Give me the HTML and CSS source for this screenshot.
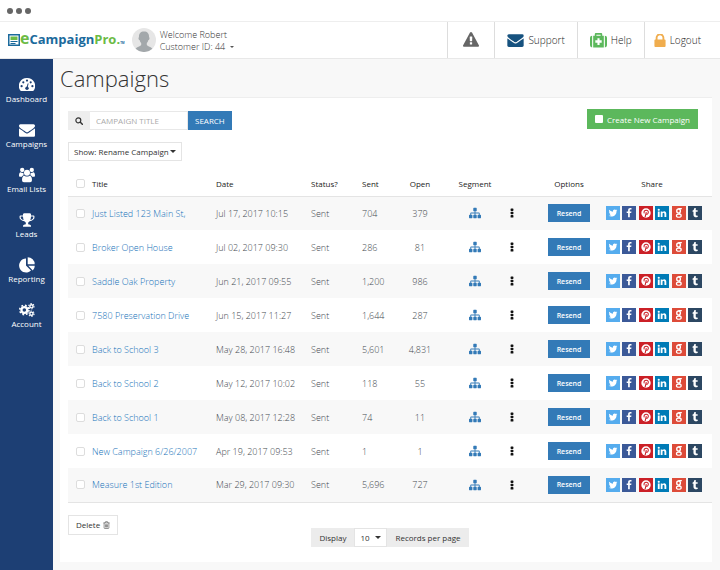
FILE: index.html
```html
<!DOCTYPE html>
<html lang="en">
<head>
  <meta charset="UTF-8">
  <title>Campaigns</title>
  <link rel="stylesheet" href="styles.css">
</head>
<body>

  <!-- Icon sprite -->
  <svg class="sprite" aria-hidden="true">
    <symbol id="i-twitter" viewBox="0 0 1792 1792"><path d="M1684 408q-67 98-162 167 1 14 1 42 0 130-38 259.500t-115.500 248.500-184.500 210.500-258 146-323 54.500q-271 0-496-145 35 4 78 4 225 0 401-138-105-2-188-64.500t-114-159.500q33 5 61 5 43 0 85-11-112-23-185.500-111.500t-73.500-205.500v-4q68 38 146 41-66-44-105-115t-39-154q0-88 44-163 121 149 294.500 238.500t371.500 99.500q-8-38-8-74 0-134 94.500-228.500t228.500-94.500q140 0 236 102 109-21 205-78-37 115-142 178 93-10 186-50z"/></symbol>
    <symbol id="i-facebook" viewBox="0 0 1792 1792"><path d="M1343 12v264h-157q-86 0-116 36t-30 108v189h293l-39 296h-254v759h-306v-759h-255v-296h255v-218q0-186 104-288.500t277-102.500q147 0 228 12z"/></symbol>
    <symbol id="i-pinterest" viewBox="0 0 16 16"><circle cx="8" cy="8" r="7.500"/><path d="M6.600 14.500 8.500 6.500M5.200 8.600C3.800 5.500 6 3.700 8.300 3.700c2.600 0 3.800 1.800 3.300 3.900-.6 2.700-3 3.100-3.700 1.700" fill="none" stroke="#cb2027" stroke-width="1.700"/></symbol>
    <symbol id="i-linkedin" viewBox="0 0 1792 1792"><path d="M477 625v991h-330v-991h330zm21-306q1 73-50.500 122t-135.500 49h-2q-82 0-132-49t-50-122q0-74 51.500-122.500t134.500-48.500 133 48.500 51 122.500zm1166 729v568h-329v-530q0-105-40.500-164.500t-126.500-59.500q-63 0-105.500 34.500t-63.500 85.500q-11 30-11 81v553h-329q2-399 2-647t-1-296l-1-48h329v144h-2q20-32 41-56t56.500-52 87-43.500 114.500-15.500q171 0 275 113.500t104 332.500z"/></symbol>
    <symbol id="i-google" viewBox="0 0 16 16"><g fill="none" stroke="#fff"><ellipse cx="7.300" cy="4.800" rx="2.900" ry="3.300" stroke-width="2.200"/><ellipse cx="7.700" cy="12.300" rx="3.800" ry="2.500" stroke-width="1.900"/><path d="M7 1h5.500M8 7.800c-1 1 3 1 3.200 3.800" stroke-width="1.700"/></g></symbol>
    <symbol id="i-tumblr" viewBox="0 0 1792 1792"><path d="M1328 1329l80 237q-23 35-111 66t-177 32q-104 2-190.500-26t-142.500-74-95-106-55.500-120-16.500-118v-544h-168v-215q72-26 129-69.500t91-90 58-102 34-99 15-88.500q1-5 4.500-8.500t7.500-3.500h244v424h333v252h-334v518q0 30 6.500 56t22.500 52.500 49.500 41.500 81.500 14q78-2 134-29z"/></symbol>
    <symbol id="i-sitemap" viewBox="0 0 1792 1792"><path d="M1792 1248v320q0 40-28 68t-68 28h-320q-40 0-68-28t-28-68v-320q0-40 28-68t68-28h96v-192h-512v192h96q40 0 68 28t28 68v320q0 40-28 68t-68 28h-320q-40 0-68-28t-28-68v-320q0-40 28-68t68-28h96v-192h-512v192h96q40 0 68 28t28 68v320q0 40-28 68t-68 28h-320q-40 0-68-28t-28-68v-320q0-40 28-68t68-28h96v-192q0-52 38-90t90-38h512v-192h-96q-40 0-68-28t-28-68v-320q0-40 28-68t68-28h320q40 0 68 28t28 68v320q0 40-28 68t-68 28h-96v192h512q52 0 90 38t38 90v192h96q40 0 68 28t28 68z"/></symbol>
    <symbol id="i-dots" viewBox="0 0 4 12"><rect x=".3" y=".5" width="3.400" height="3" rx=".8"/><rect x=".3" y="4.500" width="3.400" height="3" rx=".8"/><rect x=".3" y="8.500" width="3.400" height="3" rx=".8"/></symbol>
    <symbol id="i-envelope" viewBox="0 128 1792 1536"><path d="M1792 710v794q0 66-47 113t-113 47h-1472q-66 0-113-47t-47-113v-794q44 49 101 87 362 246 497 345 57 42 92.500 65.500t94.500 48 110 24.500h2q51 0 110-24.500t94.500-48 92.500-65.500q170-123 498-345 57-39 100-87zm0-294q0 79-49 151t-122 123q-376 261-468 325-10 7-42.500 31t-54 38.500-52 32.500-57.500 27-50 9h-2q-23 0-50-9t-57.500-27-52-32.500-54-38.500-42.500-31q-91-64-262-182.500t-205-142.500q-62-42-117-115.500t-55-136.500q0-78 41.500-130t118.500-52h1472q65 0 112.500 47t47.500 113z"/></symbol>
    <symbol id="i-trophy" viewBox="0 0 1792 1792"><path d="M522 883q-74-162-74-371h-256v96q0 78 94.500 162t235.500 113zm1078-275v-96h-256q0 209-74 371 141-29 235.500-113t94.500-162zm128-128v128q0 71-41.500 143t-112 130-173 97.500-215.500 44.500q-42 54-95 95-38 34-52.500 72.500t-14.500 89.500q0 54 30.500 91t97.500 37q75 0 133.500 45.500t58.500 114.500v64q0 14-9 23t-23 9h-832q-14 0-23-9t-9-23v-64q0-69 58.500-114.500t133.500-45.500q67 0 97.500-37t30.500-91q0-51-14.500-89.500t-52.500-72.500q-53-41-95-95-113-5-215.500-44.500t-173-97.500-112-130-41.500-143v-128q0-40 28-68t68-28h288v-96q0-66 47-113t113-47h576q66 0 113 47t47 113v96h288q40 0 68 28t28 68z"/></symbol>
    <symbol id="i-warning" viewBox="0 0 1792 1792"><path d="M1024 1375v-190q0-14-9.500-23.500t-22.500-9.500h-192q-13 0-22.500 9.500t-9.500 23.500v190q0 14 9.500 23.500t22.500 9.500h192q13 0 22.500-9.500t9.500-23.500zm-2-374l18-459q0-12-10-19-13-11-24-11h-220q-11 0-24 11-10 7-10 21l17 457q0 10 10 16.500t24 6.500h185q14 0 23.500-6.500t10.500-16.500zm-14-934l768 1408q35 63-2 126-17 29-46.500 46t-63.500 17h-1536q-34 0-63.500-17t-46.500-46q-37-63-2-126l768-1408q17-31 47-49t65-18 65 18 47 49z"/></symbol>
    <symbol id="i-lock" viewBox="320 192 1152 1344"><path d="M640 768h512v-192q0-106-75-181t-181-75-181 75-75 181v192zm832 96v576q0 40-28 68t-68 28h-960q-40 0-68-28t-28-68v-576q0-40 28-68t68-28h32v-192q0-184 132-316t316-132 316 132 132 316v192h32q40 0 68 28t28 68z"/></symbol>
    <symbol id="i-medkit" viewBox="0 0 16 14"><path d="M0 4.500Q0 2.500 2 2.500v11Q0 13.500 0 11.500zM16 4.500q0-2-2-2v11q2 0 2-2zM3 2.500h1.500V1q0-1 1-1h5q1 0 1 1v1.500H13v11H3zM6 1.500v1h4v-1zM7 4.800v2H5v2.400h2v2h2v-2h2V6.800H9v-2z" fill-rule="evenodd"/></symbol>
    <symbol id="i-dashboard" viewBox="0 0 16 14"><path d="M8 0a8 8 0 0 1 6.900 12.300q-.4.700-1.200.7H2.300q-.8 0-1.200-.7A8 8 0 0 1 8 0z"/><g fill="#1d3f74"><circle cx="2.600" cy="8.200" r="1.100"/><circle cx="4.300" cy="4.300" r="1.100"/><circle cx="8" cy="2.600" r="1.100"/><circle cx="11.700" cy="4.300" r="1.100"/><circle cx="13.400" cy="8.200" r="1.100"/><circle cx="8" cy="10.200" r="1.700"/></g><path d="M8 10.200 9.100 5.500" stroke="#1d3f74" stroke-width="1"/></symbol>
    <symbol id="i-users" viewBox="0 0 17 16"><circle cx="3.400" cy="2.700" r="2.300"/><circle cx="13.600" cy="2.700" r="2.300"/><path d="M0 9q0-3.800 1.800-3.800 1.400 1 3 .4Q4.600 7.500 5 8.200 3.500 8.700 3 9.800H1Q0 9.800 0 9zM17 9q0-3.800-1.800-3.800-1.400 1-3 .4.200 1.900-.2 2.600 1.500.5 2 1.600h2q1 0 1-.8z"/><circle cx="8.500" cy="5.500" r="3.200"/><path d="M3.200 13.500q0-4.800 2.600-4.800 2.700 2 5.400 0 2.600 0 2.600 4.800 0 2.300-2 2.300H5.200q-2 0-2-2.300z"/></symbol>
    <symbol id="i-pie" viewBox="0 0 16 16"><path d="M7 1.500V8.500l5 5A7 7 0 1 1 7 1.500zM8.700.3A7 7 0 0 1 15.700 7.300h-7zM9.300 8.800h6.500q0 2.700-2 4.600z"/></symbol>
    <symbol id="i-cogs" viewBox="0 0 18 16"><g fill="none" stroke="#fff"><circle cx="6" cy="8" r="3.300" stroke-width="2.600"/><circle cx="6" cy="8" r="5.200" stroke-width="1.800" stroke-dasharray="2.050 2.034"/><circle cx="14" cy="3.800" r="1.800" stroke-width="1.600"/><circle cx="14" cy="3.800" r="3" stroke-width="1.200" stroke-dasharray="1.570 1.570"/><circle cx="14" cy="12.200" r="1.800" stroke-width="1.600"/><circle cx="14" cy="12.200" r="3" stroke-width="1.200" stroke-dasharray="1.570 1.570"/></g></symbol>
    <symbol id="i-search" viewBox="0 0 12 12"><path d="M8 8l3 3" stroke="#333" stroke-width="2.200" stroke-linecap="round"/><circle cx="5" cy="5" r="3.700" fill="none" stroke="#333" stroke-width="1.800"/></symbol>
    <symbol id="i-trash" viewBox="0 0 10 11"><path d="M.5 2.500h9M3.200 2.500v-1q0-.8.800-.8h2q.8 0 .8.800v1M1.600 2.500v7q0 1 1 1h4.800q1 0 1-1v-7M3.600 4.500V9M5 4.500V9M6.400 4.500V9" fill="none" stroke="#555" stroke-width=".9"/></symbol>
  </svg>

  <div class="window-bar">
    <span class="dot"></span>
    <span class="dot"></span>
    <span class="dot"></span>
  </div>

  <header class="header">
    <a class="logo" href="#">
      <svg class="logo-mark" viewBox="0 0 12 12"><path fill="#1b6a9c" d="M0 0h12v12H0z"/><path fill="#fff" d="M1.500 1.500h9v9h-9z"/><path fill="#6cbb45" d="M2.500 2.500h7V6h-7z"/><path fill="#1b6a9c" d="M2.500 7h7v1h-7zM2.500 9h5v1h-5z"/></svg>
      <span class="logo-text"><span class="logo-e">e</span>Campaign<span class="logo-pro">Pro.</span></span>
      <span class="logo-tm">TM</span>
    </a>
    <div class="user">
      <svg class="avatar" viewBox="0 0 24 24"><circle cx="12" cy="12" r="12" fill="#e6e6e6"/><path fill="#a3a8ab" d="M12 3.500c3.800 0 5.300 2.500 5 5.800 1 .3.400 2.500-.6 2.800-.4 1.600-1 2.400-1.600 3v2c1.200 1.500 4.200 1.600 5.600 3.700A12 12 0 0 1 12 24a12 12 0 0 1-8.400-3.200c1.400-2.100 4.400-2.200 5.600-3.700v-2c-.6-.6-1.200-1.400-1.600-3-1-.3-1.600-2.500-.6-2.800-.3-3.300 1.200-5.800 5-5.800z"/></svg>
      <div class="user-info">
        <div>Welcome Robert</div>
        <button class="user-menu">Customer ID: 44 <span class="caret"></span></button>
      </div>
    </div>
    <nav class="top-nav">
      <a href="#" aria-label="Alerts"><svg class="icon-warning"><use href="#i-warning"/></svg></a>
      <a href="#"><svg class="icon-support"><use href="#i-envelope"/></svg>Support</a>
      <a href="#"><svg class="icon-help"><use href="#i-medkit"/></svg>Help</a>
      <a href="#"><svg class="icon-logout"><use href="#i-lock"/></svg>Logout</a>
    </nav>
  </header>

  <div class="layout">
    <nav class="sidebar">
      <a href="#"><svg><use href="#i-dashboard"/></svg>Dashboard</a>
      <a href="#"><svg><use href="#i-envelope"/></svg>Campaigns</a>
      <a href="#"><svg><use href="#i-users"/></svg>Email Lists</a>
      <a href="#"><svg><use href="#i-trophy"/></svg>Leads</a>
      <a href="#"><svg><use href="#i-pie"/></svg>Reporting</a>
      <a href="#"><svg><use href="#i-cogs"/></svg>Account</a>
    </nav>

    <main class="content">
      <h1>Campaigns</h1>
      <section class="panel">
        <div class="toolbar">
          <form class="search">
            <label for="search-title" aria-label="Campaign title"><svg><use href="#i-search"/></svg></label>
            <input id="search-title" type="text" placeholder="CAMPAIGN TITLE">
            <button type="button">SEARCH</button>
          </form>
          <button class="create"><span class="create-box"></span>Create New Campaign</button>
        </div>

        <div class="select show-select">
          <select aria-label="Show">
            <option>Show: Rename Campaign</option>
          </select>
        </div>

        <table class="campaigns">
          <thead>
            <tr>
              <th class="col-check"><input type="checkbox" aria-label="Select all"></th>
              <th>Title</th>
              <th class="col-date">Date</th>
              <th class="col-status">Status?</th>
              <th class="col-sent">Sent</th>
              <th class="col-open">Open</th>
              <th class="col-segment">Segment</th>
              <th class="col-more"></th>
              <th class="col-options">Options</th>
              <th class="col-share">Share</th>
            </tr>
          </thead>
          <tbody id="campaign-rows"></tbody>
        </table>

        <button class="delete">Delete <svg><use href="#i-trash"/></svg></button>

        <div class="pager">
          <label for="page-size">Display</label>
          <div class="select">
            <select id="page-size">
              <option>10</option>
            </select>
          </div>
          <span>Records per page</span>
        </div>
      </section>
    </main>
  </div>

  <script src="script.js"></script>
</body>
</html>
```
FILE: styles.css
```css
* {
  box-sizing: border-box;
}

html,
body {
  margin: 0;
  min-height: 100%;
}

body {
  background: #f8f8f8;
  color: #333;
  display: flex;
  flex-direction: column;
  font-family: "Open Sans", "Noto Sans", sans-serif;
  font-size: 8px;
  min-height: 100vh;
}

a {
  color: #1672b8;
  text-decoration: none;
}

button,
input,
select {
  background: none;
  border: 0;
  border-radius: 0;
  color: inherit;
  font: inherit;
  margin: 0;
  padding: 0;
}

button,
select {
  cursor: pointer;
}

svg {
  display: block;
  fill: currentColor;
}

.sprite {
  height: 0;
  position: absolute;
  width: 0;
}

.window-bar {
  align-items: center;
  background: #fff;
  border-bottom: 1px solid #eee;
  display: flex;
  gap: 3px;
  height: 22px;
  padding-left: 7px;
}

.dot {
  background: #666;
  border-radius: 50%;
  height: 6px;
  width: 6px;
}

/* Header */
.header {
  background: #fff;
  border-bottom: 1px solid #e8e8e8;
  display: flex;
  height: 37px;
}

.logo {
  align-items: center;
  display: flex;
  padding-left: 8px;
}

.logo-mark {
  height: 12px;
  width: 12px;
}

.logo-text {
  color: #1b6a9c;
  font-size: 13px;
  font-weight: 700;
  line-height: 20px;
  padding-bottom: 3px;
}

.logo-e,
.logo-pro {
  color: #6cbb45;
}

.logo-e {
  font-size: 16px;
}

.logo-tm {
  align-self: flex-end;
  color: #1b6a9c;
  font-size: 3px;
  font-weight: 700;
  padding-bottom: 13px;
}

.user {
  align-items: center;
  display: flex;
  gap: 4px;
  margin-left: 7px;
}

.avatar {
  height: 24px;
  width: 24px;
}

.user-info {
  color: #333;
  font-size: 9px;
  font-weight: 300;
  line-height: 12px;
  padding-top: 1px;
}

.user-menu {
  align-items: center;
  display: flex;
  gap: 5px;
}

.caret {
  border: 2px solid transparent;
  border-bottom: 0;
  border-top-color: #555;
}

.top-nav {
  display: flex;
  margin-left: auto;
}

.top-nav a {
  align-items: center;
  border-left: 1px solid #ddd;
  color: #222;
  display: flex;
  font-size: 10px;
  font-weight: 300;
  gap: 4px;
  padding: 0 12px;
}

.top-nav a:last-child {
  padding: 0 19px 0 9px;
}

.top-nav .icon-warning {
  color: #666;
  height: 16px;
  margin: 0 3px;
  width: 16px;
}

.icon-support {
  color: #17527f;
  height: 14px;
  width: 17px;
}

.icon-help {
  color: #5cb85c;
  height: 15px;
  width: 17px;
}

.icon-logout {
  color: #f0ad4e;
  height: 13px;
  width: 12px;
}

/* Sidebar */
.layout {
  display: flex;
  flex: 1;
}

.sidebar {
  background: #1d3f74;
  display: flex;
  flex: 0 0 53px;
  flex-direction: column;
  gap: 17px;
  padding-top: 18px;
}

.sidebar a {
  align-items: center;
  color: #fff;
  display: flex;
  flex-direction: column;
  font-size: 8px;
  line-height: 12px;
}

.sidebar svg {
  height: 16px;
  width: 16px;
}

/* Content */
.content {
  display: flex;
  flex: 1;
  flex-direction: column;
  padding: 0 8px 8px 7px;
}

h1 {
  font-size: 22px;
  font-weight: 300;
  line-height: 38px;
  margin: 0;
}

.panel {
  background: #fff;
  border-top: 1px solid #eee;
  flex: 1;
  padding: 11px 0 0 8px;
}

.toolbar {
  display: flex;
  justify-content: space-between;
  padding-right: 14px;
}

.search {
  display: flex;
  height: 19px;
  margin-top: 2px;
}

.search label {
  align-items: center;
  background: #eee;
  display: flex;
  justify-content: center;
  width: 22px;
}

.search svg {
  height: 8px;
  width: 8px;
}

.search input {
  border: 1px solid #e8e8e8;
  border-left: 0;
  padding: 0 6px;
  width: 98px;
}

.search input::placeholder {
  color: #aaa;
}

.search button {
  background: #337ab7;
  color: #fff;
  padding: 0 7px;
}

.create {
  align-items: center;
  background: #5cb85c;
  color: #fff;
  display: flex;
  font-size: 8px;
  gap: 4px;
  height: 20px;
  padding: 0 8px;
}

.create-box {
  background: #fff;
  border-radius: 1px;
  height: 8px;
  width: 8px;
}

.select {
  border: 1px solid #e4e4e4;
  display: inline-block;
  position: relative;
}

.select select {
  appearance: none;
  display: block;
  height: 17px;
  padding: 0 16px 0 5px;
}

.select::after {
  border: 3px solid transparent;
  border-bottom: 0;
  border-top-color: #333;
  content: "";
  pointer-events: none;
  position: absolute;
  right: 5px;
  top: 7px;
}

.show-select {
  display: table;
  margin: 12px 0 11px;
}

.show-select select {
  padding-right: 12px;
}

/* Campaign list */
.campaigns {
  border-bottom: 1px solid #e4e4e4;
  border-collapse: collapse;
  table-layout: fixed;
  width: 100%;
}

.campaigns th {
  border-bottom: 1px solid #e4e4e4;
  color: #222;
  font-weight: 400;
  height: 24px;
  padding: 0;
  text-align: left;
}

.campaigns td {
  color: #444a50;
  font-size: 9px;
  font-weight: 300;
  height: 34px;
  padding: 0;
  white-space: nowrap;
}

.campaigns tbody tr:nth-child(odd) {
  background: #f8f8f8;
}

.campaigns input {
  appearance: none;
  background: #fff;
  border: 1px solid #ddd;
  border-radius: 2px;
  display: block;
  height: 9px;
  margin-left: 8px;
  width: 9px;
}

.campaigns svg {
  margin: 0 auto;
}

.col-check {
  width: 24px;
}

.col-date {
  width: 95px;
}

.col-status {
  width: 51px;
}

.col-sent {
  width: 33px;
}

.col-open {
  width: 50px;
}

.col-segment {
  width: 60px;
}

.col-more {
  width: 31px;
}

.col-options {
  width: 66px;
}

.col-share {
  width: 110px;
}

.campaigns .col-open,
.campaigns .col-segment,
.campaigns .col-options {
  text-align: center;
}

.campaigns th.col-share {
  padding-right: 10px;
  text-align: center;
}

.segment {
  color: #337ab7;
  height: 12px;
  width: 12px;
}

.more {
  color: #111;
  display: block;
  padding: 0 5px;
}

.more svg {
  height: 10px;
  width: 4px;
}

.resend {
  background: #337ab7;
  color: #fff;
  font-size: 7px;
  font-weight: 600;
  height: 18px;
  width: 42px;
}

.share {
  display: flex;
  justify-content: space-between;
  padding: 0 10px 0 4px;
}

.share a {
  align-items: center;
  color: #fff;
  display: flex;
  height: 14px;
  width: 14px;
}

.share svg {
  height: 10px;
  width: 10px;
}

.twitter {
  background: #55acee;
}

.facebook {
  background: #3b5998;
}

.pinterest {
  background: #cb2027;
}

.linkedin {
  background: #007bb6;
}

.google {
  background: #dd4b39;
}

.tumblr {
  background: #2c4762;
}

/* Footer controls */
.delete {
  align-items: center;
  border: 1px solid #e4e4e4;
  display: flex;
  gap: 3px;
  height: 20px;
  margin-top: 12px;
  padding: 0 7px;
}

.delete svg {
  height: 8px;
  width: 7px;
}

.pager {
  align-items: center;
  background: #ececec;
  display: flex;
  height: 19px;
  margin: -7px auto 0;
  width: max-content;
}

.pager label,
.pager span {
  padding: 0 8px;
}

.pager .select {
  background: #fff;
}
```
FILE: script.js
```js
var campaigns = [
  ['Just Listed 123 Main St,', 'Jul 17, 2017 10:15', '704', '379'],
  ['Broker Open House', 'Jul 02, 2017 09:30', '286', '81'],
  ['Saddle Oak Property', 'Jun 21, 2017 09:55', '1,200', '986'],
  ['7580 Preservation Drive', 'Jun 15, 2017 11:27', '1,644', '287'],
  ['Back to School 3', 'May 28, 2017 16:48', '5,601', '4,831'],
  ['Back to School 2', 'May 12, 2017 10:02', '118', '55'],
  ['Back to School 1', 'May 08, 2017 12:28', '74', '11'],
  ['New Campaign 6/26/2007', 'Apr 19, 2017 09:53', '1', '1'],
  ['Measure 1st Edition', 'Mar 29, 2017 09:30', '5,696', '727']
];
var networks = ['twitter', 'facebook', 'pinterest', 'linkedin', 'google', 'tumblr'];

function icon(name, cls) {
  return '<svg class="' + (cls || '') + '"><use href="#i-' + name + '"/></svg>';
}

var share = networks.map(function (n) {
  return '<a class="' + n + '" href="#" aria-label="' + n + '">' + icon(n) + '</a>';
}).join('');

document.getElementById('campaign-rows').innerHTML = campaigns.map(function (c) {
  return '<tr>' +
    '<td><input type="checkbox" aria-label="Select ' + c[0] + '"></td>' +
    '<td><a href="#">' + c[0] + '</a></td>' +
    '<td>' + c[1] + '</td>' +
    '<td>Sent</td>' +
    '<td>' + c[2] + '</td>' +
    '<td class="col-open">' + c[3] + '</td>' +
    '<td>' + icon('sitemap', 'segment') + '</td>' +
    '<td><button class="more" aria-label="More">' + icon('dots') + '</button></td>' +
    '<td class="col-options"><button class="resend">Resend</button></td>' +
    '<td><div class="share">' + share + '</div></td>' +
    '</tr>';
}).join('');
```
